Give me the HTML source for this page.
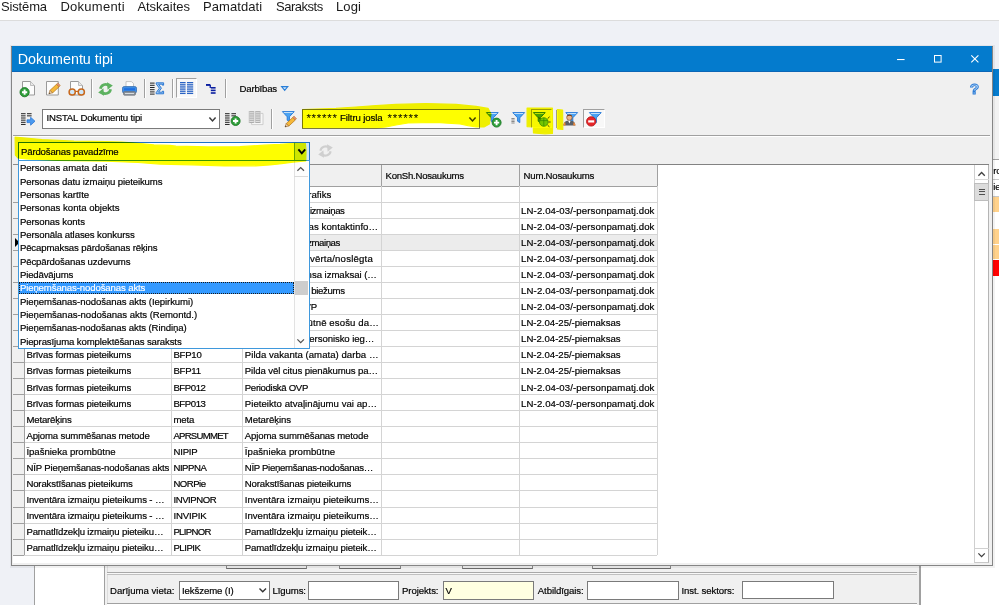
<!DOCTYPE html>
<html lang="lv"><head><meta charset="utf-8"><title>Dokumentu tipi</title>
<style>
html,body{margin:0;padding:0;}
body{width:999px;height:605px;position:relative;overflow:hidden;background:#eff1f6;font-family:"Liberation Sans",sans-serif;}
.r{position:absolute;box-sizing:border-box;}
.t{position:absolute;white-space:pre;}
svg{overflow:visible}
</style></head><body>
<div class="r" style="left:0.00px;top:0.00px;width:999.00px;height:20.00px;background:#fff;"></div>
<div class="r" style="left:0.00px;top:19.50px;width:999.00px;height:1.20px;background:#dcdcdc;"></div>
<div class="t" style="left:1.00px;top:-1.40px;font-size:13px;line-height:15.60px;color:#1a1a1a;letter-spacing:-0.151px;">Sistēma</div>
<div class="t" style="left:60.40px;top:-1.40px;font-size:13px;line-height:15.60px;color:#1a1a1a;letter-spacing:0.263px;">Dokumenti</div>
<div class="t" style="left:137.40px;top:-1.40px;font-size:13px;line-height:15.60px;color:#1a1a1a;letter-spacing:-0.027px;">Atskaites</div>
<div class="t" style="left:203.00px;top:-1.40px;font-size:13px;line-height:15.60px;color:#1a1a1a;letter-spacing:0.074px;">Pamatdati</div>
<div class="t" style="left:276.00px;top:-1.40px;font-size:13px;line-height:15.60px;color:#1a1a1a;letter-spacing:-0.484px;">Saraksts</div>
<div class="t" style="left:336.00px;top:-1.40px;font-size:13px;line-height:15.60px;color:#1a1a1a;letter-spacing:0.105px;">Logi</div>
<div class="r" style="left:992.00px;top:69.20px;width:7.00px;height:26.40px;background:#047bcd;"></div>
<div class="r" style="left:992.00px;top:95.60px;width:7.00px;height:64.00px;background:#f2f2f2;"></div>
<div class="r" style="left:992.00px;top:159.50px;width:7.00px;height:446.00px;background:#fff;"></div>
<div class="r" style="left:992.00px;top:159.00px;width:7.00px;height:1.00px;background:#a0a0a0;"></div>
<div class="r" style="left:992.00px;top:178.80px;width:7.00px;height:1.00px;background:#c8c8c8;"></div>
<div class="r" style="left:992.00px;top:196.00px;width:7.00px;height:1.00px;background:#c8c8c8;"></div>
<div class="t" style="left:993.20px;top:164.71px;font-size:9.6px;line-height:11.52px;color:#000;-webkit-text-stroke:0.18px;letter-spacing:-0.1px;">ro</div>
<div class="t" style="left:993.20px;top:181.31px;font-size:9.6px;line-height:11.52px;color:#000;-webkit-text-stroke:0.18px;letter-spacing:-0.1px;">ie</div>
<div class="r" style="left:993.00px;top:197.00px;width:6.00px;height:15.00px;background:#ffd28c;"></div>
<div class="r" style="left:993.00px;top:229.20px;width:6.00px;height:14.60px;background:#ffd28c;"></div>
<div class="r" style="left:993.00px;top:245.00px;width:6.00px;height:14.40px;background:#ffd28c;"></div>
<div class="r" style="left:993.00px;top:260.40px;width:6.00px;height:15.80px;background:#ff0000;"></div>
<div class="r" style="left:34.00px;top:560.00px;width:70.00px;height:45.00px;background:#fff;"></div>
<div class="r" style="left:33.60px;top:560.00px;width:1.00px;height:45.00px;background:#a0a0a0;"></div>
<div class="r" style="left:103.60px;top:560.00px;width:1.00px;height:45.00px;background:#a0a0a0;"></div>
<div class="r" style="left:104.60px;top:560.00px;width:815.00px;height:45.00px;background:#f0f0f0;"></div>
<div class="r" style="left:106.60px;top:560.00px;width:1.00px;height:45.00px;background:#dcdcdc;"></div>
<div class="r" style="left:919.20px;top:560.00px;width:1.40px;height:45.00px;background:#a0a0a0;"></div>
<div class="r" style="left:920.60px;top:560.00px;width:79.00px;height:45.00px;background:#fff;"></div>
<div class="r" style="left:107.00px;top:571.80px;width:810.00px;height:1.00px;background:#a8a8a8;"></div>
<div class="r" style="left:107.00px;top:572.80px;width:810.00px;height:1.40px;background:#f8f8f8;"></div>
<div class="r" style="left:107.00px;top:574.40px;width:810.00px;height:1.00px;background:#c0c0c0;"></div>
<div class="r" style="left:107.00px;top:603.00px;width:810.00px;height:1.00px;background:#a0a0a0;"></div>
<div class="r" style="left:107.00px;top:604.00px;width:810.00px;height:1.00px;background:#fff;"></div>
<div class="r" style="left:226.00px;top:560.00px;width:80.70px;height:8.60px;background:#f0f0f0;border:1px solid #8a8a8a;border-bottom-color:#6a6a6a;"></div>
<div class="r" style="left:338.90px;top:560.00px;width:61.80px;height:8.60px;background:#f0f0f0;border:1px solid #8a8a8a;border-bottom-color:#6a6a6a;"></div>
<div class="r" style="left:461.90px;top:560.00px;width:70.70px;height:8.60px;background:#f0f0f0;border:1px solid #8a8a8a;border-bottom-color:#6a6a6a;"></div>
<div class="r" style="left:591.50px;top:560.00px;width:79.50px;height:8.60px;background:#f0f0f0;border:1px solid #8a8a8a;border-bottom-color:#6a6a6a;"></div>
<div class="t" style="left:110.00px;top:584.71px;font-size:9.6px;line-height:11.52px;color:#000;-webkit-text-stroke:0.18px;letter-spacing:-0.01px;">Darījuma vieta:</div>
<div class="r" style="left:178.60px;top:580.60px;width:91.60px;height:19.60px;background:#fff;border:1px solid #7a7a7a;"></div>
<div class="t" style="left:182.00px;top:584.71px;font-size:9.6px;line-height:11.52px;color:#000;-webkit-text-stroke:0.18px;letter-spacing:-0.1px;">Iekšzeme (I)</div>
<svg class="r" style="left:258.60px;top:588.00px;" width="8" height="5" viewBox="0 0 8 5"><path d="M0.5 0.5 L3.75 3.8 L7 0.5" fill="none" stroke="#333" stroke-width="1.4"/></svg>
<div class="t" style="left:272.50px;top:584.71px;font-size:9.6px;line-height:11.52px;color:#000;-webkit-text-stroke:0.18px;letter-spacing:-0.1px;">Līgums:</div>
<div class="r" style="left:307.50px;top:580.60px;width:91.00px;height:19.60px;background:#fff;border:1px solid #7a7a7a;"></div>
<div class="t" style="left:402.00px;top:584.71px;font-size:9.6px;line-height:11.52px;color:#000;-webkit-text-stroke:0.18px;letter-spacing:-0.1px;">Projekts:</div>
<div class="r" style="left:443.00px;top:581.20px;width:91.40px;height:19.00px;background:#ffffe1;border:1px solid #7a7a7a;"></div>
<div class="t" style="left:445.60px;top:584.71px;font-size:9.6px;line-height:11.52px;color:#000;-webkit-text-stroke:0.18px;letter-spacing:-0.1px;">V</div>
<div class="t" style="left:537.80px;top:584.71px;font-size:9.6px;line-height:11.52px;color:#000;-webkit-text-stroke:0.18px;letter-spacing:-0.1px;">Atbildīgais:</div>
<div class="r" style="left:587.00px;top:580.60px;width:91.70px;height:19.60px;background:#fff;border:1px solid #7a7a7a;"></div>
<div class="t" style="left:681.40px;top:584.71px;font-size:9.6px;line-height:11.52px;color:#000;-webkit-text-stroke:0.18px;letter-spacing:-0.1px;">Inst. sektors:</div>
<div class="r" style="left:741.90px;top:580.60px;width:92.20px;height:18.80px;background:#fff;border:1px solid #7a7a7a;"></div>
<div class="r" style="left:10.00px;top:44.60px;width:984.60px;height:523.40px;background:rgba(0,0,0,0.05);"></div>
<div class="r" style="left:11.00px;top:45.60px;width:981.60px;height:520.40px;background:#f0f0f0;border:1px solid #858585;border-top-color:#6a625c;"></div>
<div class="r" style="left:11.80px;top:46.40px;width:980.00px;height:26.00px;background:#047bcd;border-bottom:1px solid #0b66b6;"></div>
<div class="t" style="left:17.70px;top:50.57px;font-size:14.3px;line-height:17.16px;color:#fff;">Dokumentu tipi</div>
<svg class="r" style="left:896.50px;top:58.80px;" width="8" height="1.2" viewBox="0 0 8 1.2"><rect width="7.6" height="1.1" fill="#fff"/></svg>
<svg class="r" style="left:934.00px;top:55.30px;" width="8" height="8" viewBox="0 0 8 8"><rect x="0.5" y="0.5" width="6.6" height="6.6" fill="none" stroke="#fff" stroke-width="1"/></svg>
<svg class="r" style="left:971.30px;top:55.30px;" width="8" height="8" viewBox="0 0 8 8"><path d="M0.3 0.3 L7.4 7.4 M7.4 0.3 L0.3 7.4" stroke="#fff" stroke-width="1.1" fill="none"/></svg>
<div class="t" style="left:969.80px;top:79.93px;font-size:15.5px;line-height:18.60px;color:#b5d6f5;font-weight:bold;-webkit-text-stroke:0.9px #2b7bd6;">?</div>
<svg class="r" style="left:22.30px;top:81.00px;" width="13" height="15" viewBox="0 0 13 15"><path d="M0.5 0.5 H8.5 L12.5 4.5 V14 H0.5 Z" fill="#fcfcfc" stroke="#9a9a9a" stroke-width="1"/><path d="M8.5 0.5 V4.5 H12.5" fill="#e8e8e8" stroke="#b0b0b0" stroke-width="0.8"/><circle cx="2.6" cy="11.2" r="4.6" fill="#2f9e3a" stroke="#1d7a27" stroke-width="0.9"/><path d="M0.0 11.2 H5.2 M2.6 8.6 V13.799999999999999" stroke="#fff" stroke-width="1.9"/></svg>
<svg class="r" style="left:46.20px;top:81.00px;" width="14" height="15" viewBox="0 0 14 15"><path d="M0.5 0.5 H12.3 V14 H0.5 Z" fill="#fcfcfc" stroke="#9a9a9a" stroke-width="1"/><g transform="translate(5.2,10.6) rotate(-43)"><rect x="0" y="-1.7" width="9" height="3.6" fill="#f5b83a" stroke="#b7791a" stroke-width="0.7"/><path d="M0 -1.7 L-3.2 0 L0 1.7 Z" fill="#f3d7a8" stroke="#a0672a" stroke-width="0.6"/><path d="M-3.2 0 L-1.9 -0.7 V0.7 Z" fill="#333"/><rect x="9" y="-1.8" width="1.8" height="3.6" fill="#e58a7a" stroke="#b7791a" stroke-width="0.5"/></g></svg>
<svg class="r" style="left:70.00px;top:81.00px;" width="13" height="15" viewBox="0 0 13 15"><path d="M0.5 0.5 H8.5 L12.5 4.5 V14 H0.5 Z" fill="#fcfcfc" stroke="#9a9a9a" stroke-width="1"/><path d="M8.5 0.5 V4.5 H12.5" fill="#e8e8e8" stroke="#b0b0b0" stroke-width="0.8"/><circle cx="2.2" cy="11" r="3.1" fill="#cfe6f7" stroke="#c8681c" stroke-width="1.5"/><circle cx="11.3" cy="11" r="3.1" fill="#cfe6f7" stroke="#c8681c" stroke-width="1.5"/><path d="M5.4 10.4 H8.2" stroke="#c8681c" stroke-width="1.2"/></svg>
<div class="r" style="left:91.00px;top:78.60px;width:1.00px;height:19.40px;background:#a0a0a0;"></div>
<div class="r" style="left:92.00px;top:78.60px;width:1.00px;height:19.40px;background:#fff;"></div>
<svg class="r" style="left:98.00px;top:81.50px;" width="15" height="14" viewBox="0 0 15 14"><path d="M2.4 6.8 A5.3 5.3 0 0 1 11 3.6" fill="none" stroke="#5db160" stroke-width="2.7"/><path d="M9 0.2 L14.8 3.6 L9.6 7.8 Z" fill="#5db160"/><path d="M12.6 7.2 A5.3 5.3 0 0 1 4 10.4" fill="none" stroke="#5db160" stroke-width="2.7"/><path d="M6 13.8 L0.2 10.4 L5.4 6.2 Z" fill="#5db160"/></svg>
<svg class="r" style="left:122.00px;top:81.00px;" width="15" height="15" viewBox="0 0 15 15"><path d="M4 6 V0.6 H9.5 L11.5 2.6 V6 Z" fill="#fdfdfd" stroke="#b5b5b5" stroke-width="0.8"/><rect x="0.5" y="5.6" width="14" height="6.4" rx="1.6" fill="#3d8ee6" stroke="#3a6fb0" stroke-width="0.8"/><rect x="2" y="7.2" width="11" height="2.2" fill="#1e6fe0"/><rect x="1.6" y="10.6" width="11.8" height="3.6" rx="0.8" fill="#8d949c" stroke="#6a7078" stroke-width="0.7"/><rect x="3" y="12" width="9" height="1" fill="#d8dce0"/></svg>
<div class="r" style="left:143.50px;top:78.60px;width:1.00px;height:19.40px;background:#a0a0a0;"></div>
<div class="r" style="left:144.50px;top:78.60px;width:1.00px;height:19.40px;background:#fff;"></div>
<svg class="r" style="left:150.40px;top:81.50px;" width="15" height="13" viewBox="0 0 15 13"><rect x="0" y="0.60" width="4.6" height="1" fill="#222"/><rect x="0" y="2.80" width="4.6" height="1" fill="#222"/><rect x="0" y="5.00" width="4.6" height="1" fill="#222"/><rect x="0" y="7.20" width="4.6" height="1" fill="#222"/><rect x="0" y="9.40" width="4.6" height="1" fill="#222"/><rect x="0" y="11.60" width="4.6" height="1" fill="#222"/><path d="M6.2 0.8 H13.6 V3.2 H12.4 V2.2 H8.6 L11.4 6.2 L8.6 10.2 H12.4 V9.2 H13.6 V11.8 H6.2 V10.6 L9.4 6.2 L6.2 1.9 Z" fill="#9cc8f2" stroke="#1f6fd0" stroke-width="0.9"/></svg>
<div class="r" style="left:171.90px;top:78.60px;width:1.00px;height:19.40px;background:#a0a0a0;"></div>
<div class="r" style="left:172.90px;top:78.60px;width:1.00px;height:19.40px;background:#fff;"></div>
<div class="r" style="left:175.50px;top:78.40px;width:21.60px;height:19.20px;background:#f8f8f8;border:1px solid #a0a0a0;border-right-color:#fff;border-bottom-color:#fff;"></div>
<svg class="r" style="left:180.00px;top:82.00px;" width="13.4" height="12.4" viewBox="0 0 13.4 12.4"><rect x="0" y="0.00" width="5.6" height="1.3" fill="#2a63c4"/><rect x="0" y="2.15" width="5.6" height="1.3" fill="#2a63c4"/><rect x="0" y="4.30" width="5.6" height="1.3" fill="#2a63c4"/><rect x="0" y="6.45" width="5.6" height="1.3" fill="#2a63c4"/><rect x="0" y="8.60" width="5.6" height="1.3" fill="#2a63c4"/><rect x="0" y="10.75" width="5.6" height="1.3" fill="#2a63c4"/><rect x="7" y="0.00" width="6.2" height="1.3" fill="#2a63c4"/><rect x="7" y="2.15" width="6.2" height="1.3" fill="#2a63c4"/><rect x="7" y="4.30" width="6.2" height="1.3" fill="#2a63c4"/><rect x="7" y="6.45" width="6.2" height="1.3" fill="#2a63c4"/><rect x="7" y="8.60" width="6.2" height="1.3" fill="#2a63c4"/><rect x="7" y="10.75" width="6.2" height="1.3" fill="#2a63c4"/></svg>
<svg class="r" style="left:205.80px;top:83.80px;" width="10" height="10" viewBox="0 0 10 10"><rect x="0" y="0" width="4.4" height="1.9" fill="#0a1ea0"/><rect x="3.6" y="1" width="1.3" height="3" fill="#0a1ea0"/><rect x="4.8" y="3" width="4.8" height="1.6" fill="#0a1ea0"/><rect x="4.8" y="5.6" width="4.8" height="1.6" fill="#0a1ea0"/><rect x="4.8" y="8.2" width="4.8" height="1.6" fill="#0a1ea0"/></svg>
<div class="r" style="left:224.50px;top:78.60px;width:1.00px;height:19.40px;background:#a0a0a0;"></div>
<div class="r" style="left:225.50px;top:78.60px;width:1.00px;height:19.40px;background:#fff;"></div>
<div class="t" style="left:239.60px;top:82.61px;font-size:9.6px;line-height:11.52px;color:#000;-webkit-text-stroke:0.18px;letter-spacing:-0.207px;">Darbības</div>
<svg class="r" style="left:281.00px;top:85.80px;" width="7.4" height="5" viewBox="0 0 7.4 5"><path d="M0.6 0.6 H6.8 L3.7 4.3 Z" fill="#cfe6fb" stroke="#2a7fd8" stroke-width="1.1"/></svg>
<svg class="r" style="left:21.40px;top:113.00px;" width="15" height="13" viewBox="0 0 15 13"><rect x="0" y="0.20" width="4.6" height="1" fill="#222"/><rect x="0" y="2.35" width="4.6" height="1" fill="#222"/><rect x="0" y="4.50" width="4.6" height="1" fill="#222"/><rect x="0" y="6.65" width="4.6" height="1" fill="#222"/><rect x="0" y="8.80" width="4.6" height="1" fill="#222"/><rect x="0" y="10.95" width="4.6" height="1" fill="#222"/><rect x="6" y="0.20" width="4.6" height="1" fill="#222"/><rect x="6" y="2.35" width="4.6" height="1" fill="#222"/><g transform="translate(6,4.2)"><path d="M0 2.6 H3.6 V0 L8 4 L3.6 8 V5.4 H0 Z" fill="#4a9af0" stroke="#1f6fd0" stroke-width="0.7"/></g></svg>
<div class="r" style="left:42.00px;top:109.20px;width:178.00px;height:19.40px;background:#fff;border:1px solid #7a7a7a;"></div>
<div class="t" style="left:46.40px;top:111.91px;font-size:9.6px;line-height:11.52px;color:#000;-webkit-text-stroke:0.18px;letter-spacing:-0.167px;">INSTAL Dokumentu tipi</div>
<svg class="r" style="left:209.20px;top:117.40px;" width="7" height="4.4" viewBox="0 0 7 4.4"><path d="M0.4 0.4 L3.5 3.9000000000000004 L6.6 0.4" fill="none" stroke="#3c3c3c" stroke-width="1.5"/></svg>
<svg class="r" style="left:225.40px;top:113.00px;" width="15" height="13" viewBox="0 0 15 13"><rect x="0" y="0.20" width="4.6" height="1" fill="#222"/><rect x="0" y="2.35" width="4.6" height="1" fill="#222"/><rect x="0" y="4.50" width="4.6" height="1" fill="#222"/><rect x="0" y="6.65" width="4.6" height="1" fill="#222"/><rect x="0" y="8.80" width="4.6" height="1" fill="#222"/><rect x="0" y="10.95" width="4.6" height="1" fill="#222"/><rect x="6.4" y="0.20" width="4.6" height="1" fill="#222"/><rect x="6.4" y="2.35" width="4.6" height="1" fill="#222"/><circle cx="10.6" cy="8" r="4.5" fill="#2f9e3a" stroke="#1d7a27" stroke-width="0.9"/><path d="M8.0 8 H13.2 M10.6 5.4 V10.6" stroke="#fff" stroke-width="1.9"/></svg>
<svg class="r" style="left:249.40px;top:111.00px;" width="15" height="14" viewBox="0 0 15 14"><path d="M2.6 2.4 H14 V13.6 H2.6 Z" fill="#f6f6f6" stroke="#c4c4c4" stroke-width="0.8"/><rect x="0" y="0" width="11.6" height="12" fill="#fafafa"/><rect x="0.2" y="0.20" width="4.8" height="1.2" fill="#a4a4a4"/><rect x="0.2" y="2.30" width="4.8" height="1.2" fill="#a4a4a4"/><rect x="0.2" y="4.40" width="4.8" height="1.2" fill="#a4a4a4"/><rect x="0.2" y="6.50" width="4.8" height="1.2" fill="#a4a4a4"/><rect x="0.2" y="8.60" width="4.8" height="1.2" fill="#a4a4a4"/><rect x="0.2" y="10.70" width="4.8" height="1.2" fill="#a4a4a4"/><rect x="6.4" y="0.20" width="4.8" height="1.2" fill="#a4a4a4"/><rect x="6.4" y="2.30" width="4.8" height="1.2" fill="#a4a4a4"/><rect x="6.4" y="4.40" width="4.8" height="1.2" fill="#a4a4a4"/><rect x="6.4" y="6.50" width="4.8" height="1.2" fill="#a4a4a4"/><rect x="6.4" y="8.60" width="4.8" height="1.2" fill="#a4a4a4"/><rect x="6.4" y="10.70" width="4.8" height="1.2" fill="#a4a4a4"/><path d="M0.2 0 V12 M5 0 V12 M6.4 0 V12 M11.2 0 V12" stroke="#bcbcbc" stroke-width="0.7"/></svg>
<div class="r" style="left:270.90px;top:109.00px;width:1.00px;height:19.60px;background:#a0a0a0;"></div>
<div class="r" style="left:271.90px;top:109.00px;width:1.00px;height:19.60px;background:#fff;"></div>
<svg class="r" style="left:281.60px;top:111.30px;" width="16" height="16" viewBox="0 0 16 16"><path d="M0.4 0.6 H12.2 L7.4 5.8 V10.6 L5.2 9.2 V5.8 Z" fill="#4aa3f2" stroke="#1f74d6" stroke-width="0.9" stroke-linejoin="round"/><path d="M1.8 1.5 H10.8" stroke="#cfe6fb" stroke-width="0.9"/><g transform="translate(5.4,13.8) rotate(-43)"><rect x="0" y="-1.7" width="9" height="3.6" fill="#f5b83a" stroke="#b7791a" stroke-width="0.7"/><path d="M0 -1.7 L-3.2 0 L0 1.7 Z" fill="#f3d7a8" stroke="#a0672a" stroke-width="0.6"/><path d="M-3.2 0 L-1.9 -0.7 V0.7 Z" fill="#333"/><rect x="9" y="-1.8" width="1.8" height="3.6" fill="#e58a7a" stroke="#b7791a" stroke-width="0.5"/></g></svg>
<div class="r" style="left:302.40px;top:109.20px;width:178.00px;height:19.40px;background:#fff;border:1px solid #7a7a7a;"></div>
<div class="t" style="left:306.40px;top:112.32px;font-size:11.5px;line-height:13.80px;color:#000;letter-spacing:0.75px;">******</div>
<div class="t" style="left:340.00px;top:111.91px;font-size:9.6px;line-height:11.52px;color:#000;-webkit-text-stroke:0.18px;letter-spacing:-0.1px;">Filtru josla</div>
<div class="t" style="left:387.60px;top:112.32px;font-size:11.5px;line-height:13.80px;color:#000;letter-spacing:0.75px;">******</div>
<svg class="r" style="left:469.20px;top:117.40px;" width="7" height="4.4" viewBox="0 0 7 4.4"><path d="M0.4 0.4 L3.5 3.9000000000000004 L6.6 0.4" fill="none" stroke="#3c3c3c" stroke-width="1.5"/></svg>
<svg class="r" style="left:486.40px;top:111.80px;" width="16" height="16" viewBox="0 0 16 16"><path d="M0.4 0.6 H12.2 L7.4 5.8 V10.6 L5.2 9.2 V5.8 Z" fill="#4aa3f2" stroke="#1f74d6" stroke-width="0.9" stroke-linejoin="round"/><path d="M1.8 1.5 H10.8" stroke="#cfe6fb" stroke-width="0.9"/><circle cx="10.6" cy="10.6" r="4.5" fill="#2f9e3a" stroke="#1d7a27" stroke-width="0.9"/><path d="M8.0 10.6 H13.2 M10.6 8.0 V13.2" stroke="#fff" stroke-width="1.9"/></svg>
<svg class="r" style="left:510.60px;top:111.80px;" width="14" height="13" viewBox="0 0 14 13"><g transform="translate(1.4,0)"><path d="M0.4 0.6 H12.2 L7.4 5.8 V10.6 L5.2 9.2 V5.8 Z" fill="#4aa3f2" stroke="#1f74d6" stroke-width="0.9" stroke-linejoin="round"/><path d="M1.8 1.5 H10.8" stroke="#cfe6fb" stroke-width="0.9"/></g><rect x="0.4" y="6.00" width="3.2" height="1" fill="#8a8a8a"/><rect x="0.4" y="7.50" width="3.2" height="1" fill="#8a8a8a"/><rect x="0.4" y="9.00" width="3.2" height="1" fill="#8a8a8a"/><rect x="0.4" y="10.50" width="3.2" height="1" fill="#8a8a8a"/></svg>
<div class="r" style="left:530.60px;top:109.40px;width:21.40px;height:18.40px;background:#f8f8f8;border:1px solid #a0a0a0;border-right-color:#fff;border-bottom-color:#fff;"></div>
<svg class="r" style="left:533.40px;top:111.80px;" width="19" height="16" viewBox="0 0 19 16"><path d="M0.4 0.6 H12.2 L7.4 5.8 V10.6 L5.2 9.2 V5.8 Z" fill="#4aa3f2" stroke="#1f74d6" stroke-width="0.9" stroke-linejoin="round"/><path d="M1.8 1.5 H10.8" stroke="#cfe6fb" stroke-width="0.9"/><circle cx="10.8" cy="10" r="4.3" fill="#74c64e" stroke="#3f8f2a" stroke-width="0.8"/><path d="M10.8 5.8 V14.2 M6.6 8.6 H15" stroke="#2a7f28" stroke-width="0.6"/><path d="M14.6 6.6 L16.6 4.8 M15.4 10 H17.6 M14.6 13.2 L16.4 14.8 M7 6.6 L5.4 5.2" stroke="#333" stroke-width="0.9"/></svg>
<div class="r" style="left:555.90px;top:109.60px;width:1.00px;height:18.40px;background:#a0a0a0;"></div>
<div class="r" style="left:556.90px;top:109.60px;width:1.00px;height:18.40px;background:#fff;"></div>
<svg class="r" style="left:563.00px;top:111.80px;" width="16" height="15" viewBox="0 0 16 15"><g transform="translate(2.4,0)"><path d="M0.4 0.6 H12.2 L7.4 5.8 V10.6 L5.2 9.2 V5.8 Z" fill="#4aa3f2" stroke="#1f74d6" stroke-width="0.9" stroke-linejoin="round"/><path d="M1.8 1.5 H10.8" stroke="#cfe6fb" stroke-width="0.9"/></g><circle cx="6.4" cy="5.6" r="2.7" fill="#e8b48a" stroke="#8a4a22" stroke-width="0.7"/><path d="M3.6 4.6 C4 2 8.8 2 9.2 4.6 C8 3.6 5 3.6 3.6 4.6 Z" fill="#7a3a18"/><path d="M0.4 13.6 C0.8 9.4 3.4 8.6 6.4 8.6 C9.4 8.6 12 9.4 12.4 13.6 Z" fill="#5a5f66"/><path d="M5.2 8.8 L6.4 11.6 L7.6 8.8 Z" fill="#fff"/><path d="M0.4 13.6 C0.6 11.6 1.2 10.6 2.2 10 L2.6 13.6 Z M12.4 13.6 C12.2 11.6 11.6 10.6 10.6 10 L10.2 13.6 Z" fill="#f08a3a"/></svg>
<div class="r" style="left:583.00px;top:109.00px;width:21.80px;height:18.80px;background:#f8f8f8;border:1px solid #a0a0a0;border-right-color:#fff;border-bottom-color:#fff;"></div>
<svg class="r" style="left:586.40px;top:111.80px;" width="16" height="16" viewBox="0 0 16 16"><g transform="translate(3,0)"><path d="M0.4 0.6 H12.2 L7.4 5.8 V10.6 L5.2 9.2 V5.8 Z" fill="#4aa3f2" stroke="#1f74d6" stroke-width="0.9" stroke-linejoin="round"/><path d="M1.8 1.5 H10.8" stroke="#cfe6fb" stroke-width="0.9"/></g><circle cx="5.2" cy="9.4" r="4.7" fill="#e8262a" stroke="#b01418" stroke-width="0.8"/><rect x="2.2" y="8.3" width="6" height="2.2" fill="#fff"/></svg>
<div class="r" style="left:13.40px;top:163.80px;width:975.60px;height:399.40px;background:#fff;border-top:1.2px solid #828282;"></div>
<div class="r" style="left:13.00px;top:135.20px;width:977.00px;height:1.00px;background:#a0a0a0;"></div>
<div class="r" style="left:13.00px;top:136.20px;width:977.00px;height:1.00px;background:#fff;"></div>
<div class="r" style="left:18.00px;top:142.20px;width:291.60px;height:18.80px;background:#fff;border:1px solid #1e73c8;"></div>
<div class="r" style="left:294.40px;top:143.20px;width:14.20px;height:16.80px;background:#cfe6f7;border-left:1px solid #6aa6de;"></div>
<div class="t" style="left:21.00px;top:145.91px;font-size:9.6px;line-height:11.52px;color:#000;-webkit-text-stroke:0.18px;letter-spacing:-0.163px;">Pārdošanas pavadzīme</div>
<svg class="r" style="left:298.00px;top:149.20px;" width="7.6" height="4.8" viewBox="0 0 7.6 4.8"><path d="M0.4 0.4 L3.8 4.3 L7.199999999999999 0.4" fill="none" stroke="#000" stroke-width="1.9"/></svg>
<svg class="r" style="left:317.60px;top:144.20px;" width="15" height="14" viewBox="0 0 15 14"><path d="M2.4 6.8 A5.3 5.3 0 0 1 11 3.6" fill="none" stroke="#cfcfcf" stroke-width="2.1"/><path d="M9 0.2 L14.8 3.6 L9.6 7.8 Z" fill="#cfcfcf"/><path d="M12.6 7.2 A5.3 5.3 0 0 1 4 10.4" fill="none" stroke="#cfcfcf" stroke-width="2.1"/><path d="M6 13.8 L0.2 10.4 L5.4 6.2 Z" fill="#cfcfcf"/></svg>
<div class="r" style="left:13.40px;top:164.60px;width:643.60px;height:21.40px;background:#f0f0f0;"></div>
<div class="r" style="left:13.40px;top:164.20px;width:644.60px;height:1.00px;background:#8c8c8c;"></div>
<div class="r" style="left:13.40px;top:185.50px;width:644.60px;height:1.00px;background:#a0a0a0;"></div>
<div class="r" style="left:23.80px;top:164.60px;width:1.00px;height:21.40px;background:#a0a0a0;"></div>
<div class="r" style="left:170.50px;top:164.60px;width:1.00px;height:21.40px;background:#a0a0a0;"></div>
<div class="r" style="left:242.30px;top:164.60px;width:1.00px;height:21.40px;background:#a0a0a0;"></div>
<div class="r" style="left:380.90px;top:164.60px;width:1.00px;height:21.40px;background:#a0a0a0;"></div>
<div class="r" style="left:518.90px;top:164.60px;width:1.00px;height:21.40px;background:#a0a0a0;"></div>
<div class="r" style="left:656.50px;top:164.60px;width:1.00px;height:21.40px;background:#a0a0a0;"></div>
<div class="t" style="left:385.60px;top:169.91px;font-size:9.6px;line-height:11.52px;color:#000;-webkit-text-stroke:0.18px;letter-spacing:-0.265px;">KonSh.Nosaukums</div>
<div class="t" style="left:523.60px;top:169.91px;font-size:9.6px;line-height:11.52px;color:#000;-webkit-text-stroke:0.18px;letter-spacing:-0.232px;">Num.Nosaukums</div>
<div class="r" style="left:24.30px;top:234.15px;width:632.70px;height:16.05px;background:#ececec;"></div>
<div class="r" style="left:13.40px;top:186.00px;width:10.90px;height:369.15px;background:#f0f0f0;"></div>
<div class="r" style="left:13.40px;top:201.55px;width:644.10px;height:1.00px;background:#d4d4d4;"></div>
<div class="r" style="left:13.40px;top:217.60px;width:644.10px;height:1.00px;background:#d4d4d4;"></div>
<div class="r" style="left:13.40px;top:233.65px;width:644.10px;height:1.00px;background:#d4d4d4;"></div>
<div class="r" style="left:13.40px;top:249.70px;width:644.10px;height:1.00px;background:#d4d4d4;"></div>
<div class="r" style="left:13.40px;top:265.75px;width:644.10px;height:1.00px;background:#d4d4d4;"></div>
<div class="r" style="left:13.40px;top:281.80px;width:644.10px;height:1.00px;background:#d4d4d4;"></div>
<div class="r" style="left:13.40px;top:297.85px;width:644.10px;height:1.00px;background:#d4d4d4;"></div>
<div class="r" style="left:13.40px;top:313.90px;width:644.10px;height:1.00px;background:#d4d4d4;"></div>
<div class="r" style="left:13.40px;top:329.95px;width:644.10px;height:1.00px;background:#d4d4d4;"></div>
<div class="r" style="left:13.40px;top:346.00px;width:644.10px;height:1.00px;background:#d4d4d4;"></div>
<div class="r" style="left:13.40px;top:362.05px;width:644.10px;height:1.00px;background:#d4d4d4;"></div>
<div class="r" style="left:13.40px;top:378.10px;width:644.10px;height:1.00px;background:#d4d4d4;"></div>
<div class="r" style="left:13.40px;top:394.15px;width:644.10px;height:1.00px;background:#d4d4d4;"></div>
<div class="r" style="left:13.40px;top:410.20px;width:644.10px;height:1.00px;background:#d4d4d4;"></div>
<div class="r" style="left:13.40px;top:426.25px;width:644.10px;height:1.00px;background:#d4d4d4;"></div>
<div class="r" style="left:13.40px;top:442.30px;width:644.10px;height:1.00px;background:#d4d4d4;"></div>
<div class="r" style="left:13.40px;top:458.35px;width:644.10px;height:1.00px;background:#d4d4d4;"></div>
<div class="r" style="left:13.40px;top:474.40px;width:644.10px;height:1.00px;background:#d4d4d4;"></div>
<div class="r" style="left:13.40px;top:490.45px;width:644.10px;height:1.00px;background:#d4d4d4;"></div>
<div class="r" style="left:13.40px;top:506.50px;width:644.10px;height:1.00px;background:#d4d4d4;"></div>
<div class="r" style="left:13.40px;top:522.55px;width:644.10px;height:1.00px;background:#d4d4d4;"></div>
<div class="r" style="left:13.40px;top:538.60px;width:644.10px;height:1.00px;background:#d4d4d4;"></div>
<div class="r" style="left:13.40px;top:554.65px;width:644.10px;height:1.00px;background:#d4d4d4;"></div>
<div class="r" style="left:23.80px;top:186.00px;width:1.00px;height:369.15px;background:#d4d4d4;"></div>
<div class="r" style="left:170.50px;top:186.00px;width:1.00px;height:369.15px;background:#d4d4d4;"></div>
<div class="r" style="left:242.30px;top:186.00px;width:1.00px;height:369.15px;background:#d4d4d4;"></div>
<div class="r" style="left:380.90px;top:186.00px;width:1.00px;height:369.15px;background:#d4d4d4;"></div>
<div class="r" style="left:518.90px;top:186.00px;width:1.00px;height:369.15px;background:#d4d4d4;"></div>
<div class="r" style="left:656.50px;top:186.00px;width:1.00px;height:369.15px;background:#d4d4d4;"></div>
<div class="r" style="left:23.80px;top:186.00px;width:1.00px;height:369.15px;background:#a0a0a0;"></div>
<div class="r" style="left:13.40px;top:201.55px;width:10.90px;height:1.00px;background:#a0a0a0;"></div>
<div class="r" style="left:13.40px;top:217.60px;width:10.90px;height:1.00px;background:#a0a0a0;"></div>
<div class="r" style="left:13.40px;top:233.65px;width:10.90px;height:1.00px;background:#a0a0a0;"></div>
<div class="r" style="left:13.40px;top:249.70px;width:10.90px;height:1.00px;background:#a0a0a0;"></div>
<div class="r" style="left:13.40px;top:265.75px;width:10.90px;height:1.00px;background:#a0a0a0;"></div>
<div class="r" style="left:13.40px;top:281.80px;width:10.90px;height:1.00px;background:#a0a0a0;"></div>
<div class="r" style="left:13.40px;top:297.85px;width:10.90px;height:1.00px;background:#a0a0a0;"></div>
<div class="r" style="left:13.40px;top:313.90px;width:10.90px;height:1.00px;background:#a0a0a0;"></div>
<div class="r" style="left:13.40px;top:329.95px;width:10.90px;height:1.00px;background:#a0a0a0;"></div>
<div class="r" style="left:13.40px;top:346.00px;width:10.90px;height:1.00px;background:#a0a0a0;"></div>
<div class="r" style="left:13.40px;top:362.05px;width:10.90px;height:1.00px;background:#a0a0a0;"></div>
<div class="r" style="left:13.40px;top:378.10px;width:10.90px;height:1.00px;background:#a0a0a0;"></div>
<div class="r" style="left:13.40px;top:394.15px;width:10.90px;height:1.00px;background:#a0a0a0;"></div>
<div class="r" style="left:13.40px;top:410.20px;width:10.90px;height:1.00px;background:#a0a0a0;"></div>
<div class="r" style="left:13.40px;top:426.25px;width:10.90px;height:1.00px;background:#a0a0a0;"></div>
<div class="r" style="left:13.40px;top:442.30px;width:10.90px;height:1.00px;background:#a0a0a0;"></div>
<div class="r" style="left:13.40px;top:458.35px;width:10.90px;height:1.00px;background:#a0a0a0;"></div>
<div class="r" style="left:13.40px;top:474.40px;width:10.90px;height:1.00px;background:#a0a0a0;"></div>
<div class="r" style="left:13.40px;top:490.45px;width:10.90px;height:1.00px;background:#a0a0a0;"></div>
<div class="r" style="left:13.40px;top:506.50px;width:10.90px;height:1.00px;background:#a0a0a0;"></div>
<div class="r" style="left:13.40px;top:522.55px;width:10.90px;height:1.00px;background:#a0a0a0;"></div>
<div class="r" style="left:13.40px;top:538.60px;width:10.90px;height:1.00px;background:#a0a0a0;"></div>
<div class="r" style="left:13.40px;top:554.65px;width:10.90px;height:1.00px;background:#a0a0a0;"></div>
<svg class="r" style="left:15.00px;top:237.65px;" width="5" height="9" viewBox="0 0 5 9"><path d="M0 0 L4.5 4.5 L0 9 Z" fill="#000"/></svg>
<div class="t" style="left:308.30px;top:188.91px;font-size:9.6px;line-height:11.52px;color:#000;-webkit-text-stroke:0.18px;letter-spacing:0.011px;">rafiks</div>
<div class="t" style="left:309.90px;top:204.96px;font-size:9.6px;line-height:11.52px;color:#000;-webkit-text-stroke:0.18px;letter-spacing:-0.41px;">izmaiņas</div>
<div class="t" style="left:521.10px;top:204.96px;font-size:9.6px;line-height:11.52px;color:#000;-webkit-text-stroke:0.18px;letter-spacing:0.118px;">LN-2.04-03/-personpamatj.dok</div>
<div class="t" style="left:308.60px;top:221.01px;font-size:9.6px;line-height:11.52px;color:#000;-webkit-text-stroke:0.18px;letter-spacing:0.051px;">as kontaktinfo…</div>
<div class="t" style="left:521.10px;top:221.01px;font-size:9.6px;line-height:11.52px;color:#000;-webkit-text-stroke:0.18px;letter-spacing:0.118px;">LN-2.04-03/-personpamatj.dok</div>
<div class="t" style="left:307.20px;top:237.06px;font-size:9.6px;line-height:11.52px;color:#000;-webkit-text-stroke:0.18px;letter-spacing:-0.435px;">zmaiņas</div>
<div class="t" style="left:521.10px;top:237.06px;font-size:9.6px;line-height:11.52px;color:#000;-webkit-text-stroke:0.18px;letter-spacing:0.118px;">LN-2.04-03/-personpamatj.dok</div>
<div class="t" style="left:309.90px;top:253.11px;font-size:9.6px;line-height:11.52px;color:#000;-webkit-text-stroke:0.18px;letter-spacing:0.2px;">vērta/noslēgta</div>
<div class="t" style="left:521.10px;top:253.11px;font-size:9.6px;line-height:11.52px;color:#000;-webkit-text-stroke:0.18px;letter-spacing:0.118px;">LN-2.04-03/-personpamatj.dok</div>
<div class="t" style="left:306.60px;top:269.16px;font-size:9.6px;line-height:11.52px;color:#000;-webkit-text-stroke:0.18px;letter-spacing:-0.043px;">nsa izmaksai (…</div>
<div class="t" style="left:521.10px;top:269.16px;font-size:9.6px;line-height:11.52px;color:#000;-webkit-text-stroke:0.18px;letter-spacing:0.118px;">LN-2.04-03/-personpamatj.dok</div>
<div class="t" style="left:311.20px;top:285.21px;font-size:9.6px;line-height:11.52px;color:#000;-webkit-text-stroke:0.18px;letter-spacing:-0.307px;">biežums</div>
<div class="t" style="left:521.10px;top:285.21px;font-size:9.6px;line-height:11.52px;color:#000;-webkit-text-stroke:0.18px;letter-spacing:0.118px;">LN-2.04-03/-personpamatj.dok</div>
<div class="t" style="left:304.40px;top:301.26px;font-size:9.6px;line-height:11.52px;color:#000;-webkit-text-stroke:0.18px;letter-spacing:-0.053px;">VP</div>
<div class="t" style="left:521.10px;top:301.26px;font-size:9.6px;line-height:11.52px;color:#000;-webkit-text-stroke:0.18px;letter-spacing:0.118px;">LN-2.04-03/-personpamatj.dok</div>
<div class="t" style="left:307.50px;top:317.31px;font-size:9.6px;line-height:11.52px;color:#000;-webkit-text-stroke:0.18px;letter-spacing:0.106px;">ūtnē esošu da…</div>
<div class="t" style="left:521.10px;top:317.31px;font-size:9.6px;line-height:11.52px;color:#000;-webkit-text-stroke:0.18px;letter-spacing:-0.013px;">LN-2.04-25/-piemaksas</div>
<div class="t" style="left:309.30px;top:333.36px;font-size:9.6px;line-height:11.52px;color:#000;-webkit-text-stroke:0.18px;letter-spacing:-0.083px;">ersonisko ieg…</div>
<div class="t" style="left:521.10px;top:333.36px;font-size:9.6px;line-height:11.52px;color:#000;-webkit-text-stroke:0.18px;letter-spacing:-0.013px;">LN-2.04-25/-piemaksas</div>
<div class="t" style="left:26.40px;top:349.41px;font-size:9.6px;line-height:11.52px;color:#000;-webkit-text-stroke:0.18px;letter-spacing:-0.124px;">Brīvas formas pieteikums</div>
<div class="t" style="left:173.40px;top:349.41px;font-size:9.6px;line-height:11.52px;color:#000;-webkit-text-stroke:0.18px;letter-spacing:-0.23px;">BFP10</div>
<div class="t" style="left:244.80px;top:349.41px;font-size:9.6px;line-height:11.52px;color:#000;-webkit-text-stroke:0.18px;letter-spacing:0.032px;">Pilda vakanta (amata) darba …</div>
<div class="t" style="left:521.10px;top:349.41px;font-size:9.6px;line-height:11.52px;color:#000;-webkit-text-stroke:0.18px;letter-spacing:-0.013px;">LN-2.04-25/-piemaksas</div>
<div class="t" style="left:26.40px;top:365.46px;font-size:9.6px;line-height:11.52px;color:#000;-webkit-text-stroke:0.18px;letter-spacing:-0.124px;">Brīvas formas pieteikums</div>
<div class="t" style="left:173.40px;top:365.46px;font-size:9.6px;line-height:11.52px;color:#000;-webkit-text-stroke:0.18px;letter-spacing:-0.23px;">BFP11</div>
<div class="t" style="left:244.80px;top:365.46px;font-size:9.6px;line-height:11.52px;color:#000;-webkit-text-stroke:0.18px;letter-spacing:-0.089px;">Pilda vēl citus pienākumus pa…</div>
<div class="t" style="left:521.10px;top:365.46px;font-size:9.6px;line-height:11.52px;color:#000;-webkit-text-stroke:0.18px;letter-spacing:-0.013px;">LN-2.04-25/-piemaksas</div>
<div class="t" style="left:26.40px;top:381.51px;font-size:9.6px;line-height:11.52px;color:#000;-webkit-text-stroke:0.18px;letter-spacing:-0.124px;">Brīvas formas pieteikums</div>
<div class="t" style="left:173.40px;top:381.51px;font-size:9.6px;line-height:11.52px;color:#000;-webkit-text-stroke:0.18px;letter-spacing:-0.431px;">BFP012</div>
<div class="t" style="left:244.80px;top:381.51px;font-size:9.6px;line-height:11.52px;color:#000;-webkit-text-stroke:0.18px;letter-spacing:-0.326px;">Periodiskā OVP</div>
<div class="t" style="left:521.10px;top:381.51px;font-size:9.6px;line-height:11.52px;color:#000;-webkit-text-stroke:0.18px;letter-spacing:0.118px;">LN-2.04-03/-personpamatj.dok</div>
<div class="t" style="left:26.40px;top:397.56px;font-size:9.6px;line-height:11.52px;color:#000;-webkit-text-stroke:0.18px;letter-spacing:-0.124px;">Brīvas formas pieteikums</div>
<div class="t" style="left:173.40px;top:397.56px;font-size:9.6px;line-height:11.52px;color:#000;-webkit-text-stroke:0.18px;letter-spacing:-0.431px;">BFP013</div>
<div class="t" style="left:244.80px;top:397.56px;font-size:9.6px;line-height:11.52px;color:#000;-webkit-text-stroke:0.18px;letter-spacing:0.038px;">Pieteikto atvaļinājumu vai ap…</div>
<div class="t" style="left:521.10px;top:397.56px;font-size:9.6px;line-height:11.52px;color:#000;-webkit-text-stroke:0.18px;letter-spacing:0.118px;">LN-2.04-03/-personpamatj.dok</div>
<div class="t" style="left:26.40px;top:413.61px;font-size:9.6px;line-height:11.52px;color:#000;-webkit-text-stroke:0.18px;letter-spacing:-0.165px;">Metarēķins</div>
<div class="t" style="left:173.40px;top:413.61px;font-size:9.6px;line-height:11.52px;color:#000;-webkit-text-stroke:0.18px;letter-spacing:-0.136px;">meta</div>
<div class="t" style="left:244.80px;top:413.61px;font-size:9.6px;line-height:11.52px;color:#000;-webkit-text-stroke:0.18px;letter-spacing:-0.075px;">Metarēķins</div>
<div class="t" style="left:26.40px;top:429.66px;font-size:9.6px;line-height:11.52px;color:#000;-webkit-text-stroke:0.18px;letter-spacing:-0.154px;">Apjoma summēšanas metode</div>
<div class="t" style="left:173.40px;top:429.66px;font-size:9.6px;line-height:11.52px;color:#000;-webkit-text-stroke:0.18px;letter-spacing:-0.748px;">APRSUMMET</div>
<div class="t" style="left:244.80px;top:429.66px;font-size:9.6px;line-height:11.52px;color:#000;-webkit-text-stroke:0.18px;letter-spacing:-0.137px;">Apjoma summēšanas metode</div>
<div class="t" style="left:26.40px;top:445.71px;font-size:9.6px;line-height:11.52px;color:#000;-webkit-text-stroke:0.18px;letter-spacing:-0.024px;">Īpašnieka prombūtne</div>
<div class="t" style="left:173.40px;top:445.71px;font-size:9.6px;line-height:11.52px;color:#000;-webkit-text-stroke:0.18px;letter-spacing:-0.175px;">NIPIP</div>
<div class="t" style="left:244.80px;top:445.71px;font-size:9.6px;line-height:11.52px;color:#000;-webkit-text-stroke:0.18px;letter-spacing:0.039px;">Īpašnieka prombūtne</div>
<div class="t" style="left:26.40px;top:461.76px;font-size:9.6px;line-height:11.52px;color:#000;-webkit-text-stroke:0.18px;letter-spacing:-0.139px;">NĪP Pieņemšanas-nodošanas akts</div>
<div class="t" style="left:173.40px;top:461.76px;font-size:9.6px;line-height:11.52px;color:#000;-webkit-text-stroke:0.18px;letter-spacing:-0.44px;">NIPPNA</div>
<div class="t" style="left:244.80px;top:461.76px;font-size:9.6px;line-height:11.52px;color:#000;-webkit-text-stroke:0.18px;letter-spacing:-0.316px;">NĪP Pieņemšanas-nodošanas…</div>
<div class="t" style="left:26.40px;top:477.81px;font-size:9.6px;line-height:11.52px;color:#000;-webkit-text-stroke:0.18px;letter-spacing:-0.146px;">Norakstīšanas pieteikums</div>
<div class="t" style="left:173.40px;top:477.81px;font-size:9.6px;line-height:11.52px;color:#000;-webkit-text-stroke:0.18px;letter-spacing:-0.518px;">NORPie</div>
<div class="t" style="left:244.80px;top:477.81px;font-size:9.6px;line-height:11.52px;color:#000;-webkit-text-stroke:0.18px;letter-spacing:-0.146px;">Norakstīšanas pieteikums</div>
<div class="t" style="left:26.40px;top:493.86px;font-size:9.6px;line-height:11.52px;color:#000;-webkit-text-stroke:0.18px;letter-spacing:-0.136px;">Inventāra izmaiņu pieteikums - …</div>
<div class="t" style="left:173.40px;top:493.86px;font-size:9.6px;line-height:11.52px;color:#000;-webkit-text-stroke:0.18px;letter-spacing:-0.426px;">INVIPNOR</div>
<div class="t" style="left:244.80px;top:493.86px;font-size:9.6px;line-height:11.52px;color:#000;-webkit-text-stroke:0.18px;letter-spacing:0.006px;">Inventāra izmaiņu pieteikums…</div>
<div class="t" style="left:26.40px;top:509.91px;font-size:9.6px;line-height:11.52px;color:#000;-webkit-text-stroke:0.18px;letter-spacing:-0.136px;">Inventāra izmaiņu pieteikums - …</div>
<div class="t" style="left:173.40px;top:509.91px;font-size:9.6px;line-height:11.52px;color:#000;-webkit-text-stroke:0.18px;letter-spacing:-0.149px;">INVIPIK</div>
<div class="t" style="left:244.80px;top:509.91px;font-size:9.6px;line-height:11.52px;color:#000;-webkit-text-stroke:0.18px;letter-spacing:0.006px;">Inventāra izmaiņu pieteikums…</div>
<div class="t" style="left:26.40px;top:525.96px;font-size:9.6px;line-height:11.52px;color:#000;-webkit-text-stroke:0.18px;letter-spacing:-0.139px;">Pamatlīdzekļu izmaiņu pieteiku…</div>
<div class="t" style="left:173.40px;top:525.96px;font-size:9.6px;line-height:11.52px;color:#000;-webkit-text-stroke:0.18px;letter-spacing:-0.678px;">PLIPNOR</div>
<div class="t" style="left:244.80px;top:525.96px;font-size:9.6px;line-height:11.52px;color:#000;-webkit-text-stroke:0.18px;letter-spacing:-0.135px;">Pamatlīdzekļu izmaiņu pieteik…</div>
<div class="t" style="left:26.40px;top:542.01px;font-size:9.6px;line-height:11.52px;color:#000;-webkit-text-stroke:0.18px;letter-spacing:-0.139px;">Pamatlīdzekļu izmaiņu pieteiku…</div>
<div class="t" style="left:173.40px;top:542.01px;font-size:9.6px;line-height:11.52px;color:#000;-webkit-text-stroke:0.18px;letter-spacing:-0.464px;">PLIPIK</div>
<div class="t" style="left:244.80px;top:542.01px;font-size:9.6px;line-height:11.52px;color:#000;-webkit-text-stroke:0.18px;letter-spacing:-0.135px;">Pamatlīdzekļu izmaiņu pieteik…</div>
<div class="r" style="left:974.20px;top:165.00px;width:14.80px;height:397.60px;background:#fff;border-left:1px solid #cfcfcf;border-right:1px solid #b4b4b4;border-bottom:1px solid #c8c8c8;"></div>
<div class="r" style="left:974.20px;top:178.80px;width:14.80px;height:1.00px;background:#d8d8d8;"></div>
<svg class="r" style="left:978.20px;top:171.60px;" width="7.2" height="4.2" viewBox="0 0 7.2 4.2"><path d="M0.4 3.8000000000000003 L3.6 0.5 L6.8 3.8000000000000003" fill="none" stroke="#404040" stroke-width="1.3"/></svg>
<div class="r" style="left:974.20px;top:183.20px;width:14.80px;height:17.80px;background:#dcdcdc;border:1px solid #bdbdbd;"></div>
<div class="r" style="left:978.60px;top:188.70px;width:6.20px;height:1.10px;background:#505050;"></div>
<div class="r" style="left:978.60px;top:191.35px;width:6.20px;height:1.10px;background:#505050;"></div>
<div class="r" style="left:978.60px;top:194.00px;width:6.20px;height:1.10px;background:#505050;"></div>
<div class="r" style="left:974.20px;top:547.60px;width:14.80px;height:1.00px;background:#d0d0d0;"></div>
<svg class="r" style="left:978.20px;top:553.30px;" width="7.2" height="4.2" viewBox="0 0 7.2 4.2"><path d="M0.4 0.4 L3.6 3.7 L6.8 0.4" fill="none" stroke="#404040" stroke-width="1.3"/></svg>
<div class="r" style="left:18.00px;top:160.40px;width:291.80px;height:188.60px;background:#fff;border:1px solid #3f98dc;"></div>
<div class="t" style="left:19.90px;top:162.41px;font-size:9.6px;line-height:11.52px;color:#000;-webkit-text-stroke:0.18px;letter-spacing:-0.029px;">Personas amata dati</div>
<div class="t" style="left:19.90px;top:175.74px;font-size:9.6px;line-height:11.52px;color:#000;-webkit-text-stroke:0.18px;letter-spacing:-0.113px;">Personas datu izmaiņu pieteikums</div>
<div class="t" style="left:19.90px;top:189.07px;font-size:9.6px;line-height:11.52px;color:#000;-webkit-text-stroke:0.18px;letter-spacing:-0.037px;">Personas kartīte</div>
<div class="t" style="left:19.90px;top:202.40px;font-size:9.6px;line-height:11.52px;color:#000;-webkit-text-stroke:0.18px;letter-spacing:-0.004px;">Personas konta objekts</div>
<div class="t" style="left:19.90px;top:215.73px;font-size:9.6px;line-height:11.52px;color:#000;-webkit-text-stroke:0.18px;letter-spacing:-0.083px;">Personas konts</div>
<div class="t" style="left:19.90px;top:229.06px;font-size:9.6px;line-height:11.52px;color:#000;-webkit-text-stroke:0.18px;letter-spacing:-0.096px;">Personāla atlases konkurss</div>
<div class="t" style="left:19.90px;top:242.39px;font-size:9.6px;line-height:11.52px;color:#000;-webkit-text-stroke:0.18px;letter-spacing:-0.128px;">Pēcapmaksas pārdošanas rēķins</div>
<div class="t" style="left:19.90px;top:255.72px;font-size:9.6px;line-height:11.52px;color:#000;-webkit-text-stroke:0.18px;letter-spacing:-0.115px;">Pēcpārdošanas uzdevums</div>
<div class="t" style="left:19.90px;top:269.05px;font-size:9.6px;line-height:11.52px;color:#000;-webkit-text-stroke:0.18px;letter-spacing:-0.142px;">Piedāvājums</div>
<div class="r" style="left:19.00px;top:281.87px;width:274.80px;height:12.60px;background:#3399ff;border:1px dotted #1a1a1a;"></div>
<div class="t" style="left:19.90px;top:282.38px;font-size:9.6px;line-height:11.52px;color:#fff;-webkit-text-stroke:0.18px;letter-spacing:-0.12px;">Pieņemšanas-nodošanas akts</div>
<div class="t" style="left:19.90px;top:295.71px;font-size:9.6px;line-height:11.52px;color:#000;-webkit-text-stroke:0.18px;letter-spacing:-0.085px;">Pieņemšanas-nodošanas akts (Iepirkumi)</div>
<div class="t" style="left:19.90px;top:309.04px;font-size:9.6px;line-height:11.52px;color:#000;-webkit-text-stroke:0.18px;letter-spacing:-0.054px;">Pieņemšanas-nodošanas akts (Remontd.)</div>
<div class="t" style="left:19.90px;top:322.37px;font-size:9.6px;line-height:11.52px;color:#000;-webkit-text-stroke:0.18px;letter-spacing:-0.095px;">Pieņemšanas-nodošanas akts (Rindiņa)</div>
<div class="t" style="left:19.90px;top:335.70px;font-size:9.6px;line-height:11.52px;color:#000;-webkit-text-stroke:0.18px;letter-spacing:-0.13px;">Pieprasījuma komplektēšanas saraksts</div>
<div class="r" style="left:293.80px;top:161.40px;width:13.80px;height:186.40px;background:#fdfdfd;"></div>
<div class="r" style="left:293.80px;top:161.40px;width:1.00px;height:186.40px;background:#e2e2e2;"></div>
<div class="r" style="left:293.80px;top:176.20px;width:13.80px;height:1.00px;background:#dadada;"></div>
<svg class="r" style="left:297.00px;top:166.60px;" width="7.4" height="4.2" viewBox="0 0 7.4 4.2"><path d="M0.4 3.8000000000000003 L3.7 0.5 L7.0 3.8000000000000003" fill="none" stroke="#505050" stroke-width="1.2"/></svg>
<div class="r" style="left:294.80px;top:281.00px;width:12.80px;height:13.60px;background:#cdcdcd;"></div>
<svg class="r" style="left:297.00px;top:338.60px;" width="7.4" height="4.2" viewBox="0 0 7.4 4.2"><path d="M0.4 0.4 L3.7 3.7 L7 0.4" fill="none" stroke="#505050" stroke-width="1.2"/></svg>
<svg class="r" style="left:0;top:0;mix-blend-mode:multiply;" width="999" height="605"><path d="M302.6 109.6 L336.0 108.4 L356.0 107.0 L376.0 105.6 L396.0 104.4 L426.0 103.6 L456.0 104.4 L476.0 106.4 L488.0 108.4 L491.0 114.0 L489.4 124.0 L484.0 127.0 L476.0 127.0 L468.0 125.6 L460.0 124.0 L436.0 122.4 L408.0 123.0 L396.0 125.0 L386.0 127.0 L376.0 127.8 L302.6 127.8 Z" fill="#fefe00" stroke="#fefe00" stroke-width="1.2" stroke-linejoin="round"/></svg>
<svg class="r" style="left:0;top:0;mix-blend-mode:multiply;" width="999" height="605"><path d="M15.1 137.2 L42.0 139.6 L74.0 141.2 L106.0 141.7 L122.0 142.0 L138.0 143.3 L154.0 144.9 L170.0 145.4 L176.0 146.2 L208.0 146.9 L240.0 146.7 L264.0 145.2 L280.0 144.4 L294.6 143.3 L305.4 143.6 L306.0 150.0 L305.8 160.8 L293.1 162.1 L281.6 163.7 L270.0 164.9 L256.0 165.8 L224.0 166.0 L192.0 164.8 L160.0 164.1 L138.0 162.5 L106.0 161.2 L58.0 160.4 L26.0 159.0 L18.0 158.0 L15.4 155.0 Z" fill="#fefe00" stroke="#fefe00" stroke-width="1.2" stroke-linejoin="round"/></svg>
<svg class="r" style="left:0;top:0;mix-blend-mode:multiply;" width="999" height="605"><path d="M527.1 108.0 L552.4 108.0 L552.6 126.6 L552.4 133.4 L545.0 133.8 L533.5 133.0 L533.3 127.0 L527.1 126.6 Z" fill="#fefe00" stroke="#fefe00" stroke-width="1.2" stroke-linejoin="round"/></svg>
<svg class="r" style="left:0;top:0;mix-blend-mode:multiply;" width="999" height="605"><path d="M557.3 109.5 L562.6 110.0 L562.8 129.4 L557.5 129.0 Z" fill="#fefe00" stroke="#fefe00" stroke-width="1.2" stroke-linejoin="round"/></svg>
</body></html>
